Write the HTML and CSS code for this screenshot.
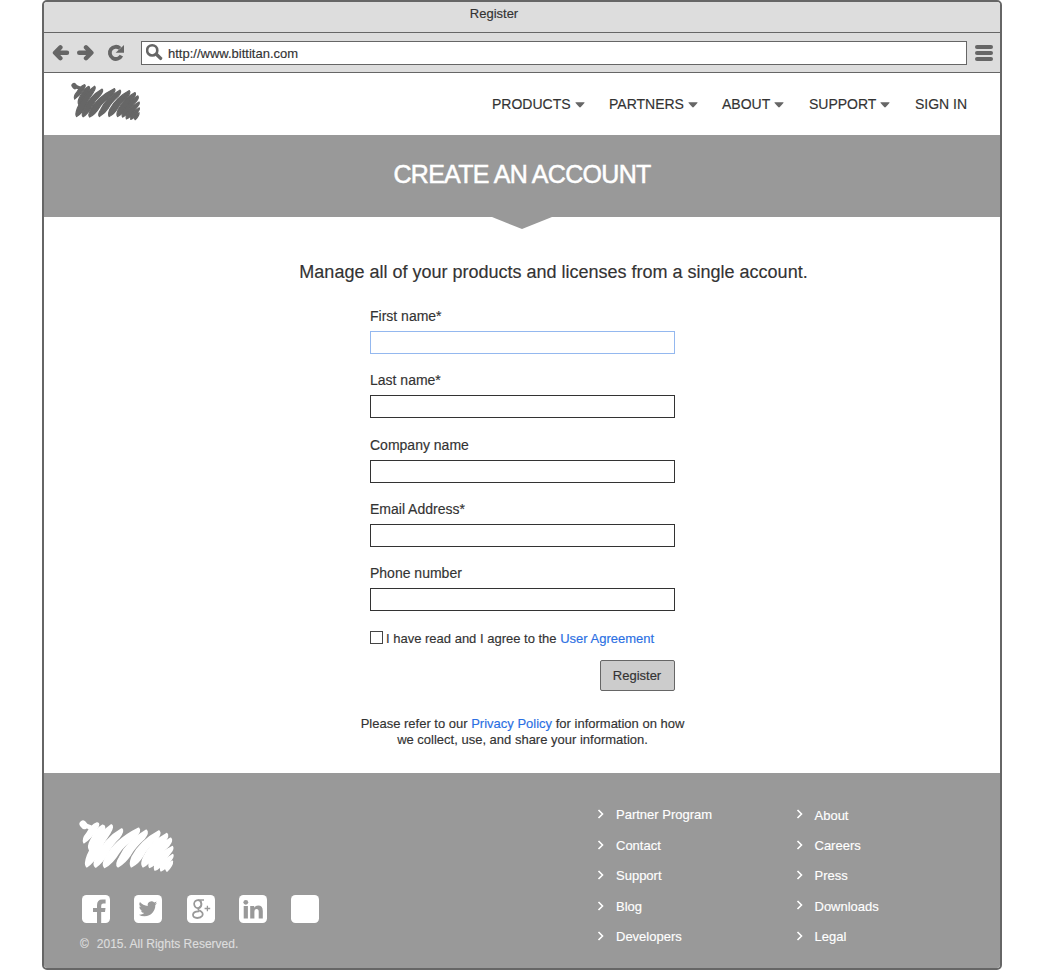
FILE: index.html
```html
<!DOCTYPE html>
<html lang="en">
<head>
<meta charset="utf-8">
<title>Register</title>
<link rel="stylesheet" href="styles.css">
</head>
<body>
<svg class="defs" aria-hidden="true">
  <symbol id="scribble" viewBox="28 28 288 160">
    <g fill="currentColor" stroke="currentColor" stroke-width="5" stroke-linecap="round" stroke-linejoin="round">
      <path stroke-width="21" d="M40 42L44 47"/>
      <path stroke-width="14" d="M46 46L62 52"/>
      <path d="M43 98Q38 86 52 70Q64 46 82 39Q92 40 80 58Q64 84 43 98Z"/>
      <path d="M60 120Q53 110 64 90Q80 56 99 46Q109 47 101 64Q82 100 60 120Z"/>
      <path d="M51 170Q44 162 54 136Q78 76 125 45Q132 50 121 68Q100 96 88 126Q74 156 51 170Z"/>
      <path d="M78 171Q69 164 80 144Q104 86 156 57Q163 63 149 82Q126 104 114 128Q98 158 78 171Z"/>
      <path d="M105 172Q97 164 108 144Q136 90 207 55Q214 62 198 80Q160 108 146 130Q128 160 105 172Z"/>
      <path d="M145 170Q137 162 150 142Q172 94 230 61Q237 68 223 86Q194 112 182 134Q166 158 145 170Z"/>
      <path d="M185 170Q179 162 188 140Q214 92 268 63Q275 70 261 88Q232 112 220 136Q206 160 185 170Z"/>
      <path d="M220 170Q213 162 222 142Q244 96 291 71Q298 78 285 94Q262 116 250 140Q238 162 220 170Z"/>
      <path d="M240 172Q235 162 244 144Q264 106 303 85Q309 92 298 106Q272 130 262 152Q252 168 240 172Z"/>
      <path d="M256 180Q252 168 262 150Q278 124 308 110Q312 116 302 128L276 162Q268 176 256 180Z"/>
      <path d="M274 182Q270 168 280 154L309 134Q312 140 302 152Q290 176 274 182Z"/>
      <path d="M292 183L285 170L308 154Q309 166 292 183Z"/>
    </g>
  </symbol>
  <symbol id="chevron" viewBox="0 0 8 10"><path d="M1.5 1L5.5 5L1.5 9" fill="none" stroke="currentColor" stroke-width="1.6"/></symbol>
  <symbol id="caret" viewBox="0 0 10 6"><path d="M1 .3H9Q10 .3 9.4 1.1L5.8 5Q5 5.8 4.2 5L.6 1.1Q0 .3 1 .3Z" fill="currentColor"/></symbol>
</svg>
<div class="window">
  <div class="titlebar">Register</div>
  <div class="toolbar">
    <svg class="arrows" viewBox="0 0 74 18" fill="none" stroke="currentColor" stroke-width="4.4">
      <path d="M8.4 3.4L3 8.8L8.4 14.2M3.4 8.8H15M34 3.4L39.4 8.8L34 14.2M39 8.8H27.2" stroke-linecap="round" stroke-linejoin="round"/>
      <path d="M68 4.3A6.1 6.1 0 1 0 69.4 11.6" stroke-width="3.8"/>
      <path d="M72 1V8.8H63.6Z" fill="currentColor" stroke="none"/>
    </svg>
    <div class="address">
      <svg class="search" viewBox="0 0 18 18" fill="none" stroke="currentColor"><circle cx="6.2" cy="6.4" r="5.1" stroke-width="2.6"/><path d="M10.6 10.5L14.6 14.4" stroke-width="3.4" stroke-linecap="round"/></svg>
      <span>http://www.bittitan.com</span>
    </div>
    <div class="burger"><i></i><i></i><i></i></div>
  </div>
  <header class="header">
    <svg class="logo"><use href="#scribble"/></svg>
    <nav class="nav">
      <a class="products">PRODUCTS <svg class="caret"><use href="#caret"/></svg></a>
      <a class="partners">PARTNERS <svg class="caret"><use href="#caret"/></svg></a>
      <a class="about">ABOUT <svg class="caret"><use href="#caret"/></svg></a>
      <a class="support">SUPPORT <svg class="caret"><use href="#caret"/></svg></a>
      <a class="signin">SIGN IN</a>
    </nav>
  </header>
  <div class="banner"><h1>CREATE AN ACCOUNT</h1></div>
  <main class="main">
    <svg class="pointer" viewBox="0 0 60 12"><path d="M0 0H60L30 12Z" fill="currentColor"/></svg>
    <h2 class="lead">Manage all of your products and licenses from a single account.</h2>
    <form class="form">
      <label class="field focused"><span>First name*</span><input type="text"></label>
      <label class="field"><span>Last name*</span><input type="text"></label>
      <label class="field"><span>Company name</span><input type="text"></label>
      <label class="field"><span>Email Address*</span><input type="text"></label>
      <label class="field"><span>Phone number</span><input type="text"></label>
      <label class="agree"><input type="checkbox"><span>I have read and I agree to the <a>User Agreement</a></span></label>
      <button class="submit" type="button">Register</button>
    </form>
    <p class="privacy">Please refer to our <a>Privacy Policy</a> for information on how<br>we collect, use, and share your information.</p>
  </main>
  <footer class="footer">
    <div class="brand">
      <svg class="footlogo"><use href="#scribble"/></svg>
      <div class="social">
        <svg viewBox="0 0 28 28"><rect width="28" height="28" rx="4.5" fill="#fff"/><path d="M15 28V16.9H11V12.9H15V10.2Q15 4.6 20.3 4.6H23.6V8.6H21.2Q19.2 8.6 19.2 10.7V12.9H23.5L23 16.9H19.2V28Z" fill="#999"/></svg>
        <svg viewBox="0 0 28 28"><rect width="28" height="28" rx="4.5" fill="#fff"/><path transform="translate(4.7 4.6) scale(.77)" d="M23.95 4.57a10 10 0 0 1-2.82.77 4.96 4.96 0 0 0 2.16-2.72c-.95.55-2 .96-3.12 1.18a4.92 4.92 0 0 0-8.39 4.49C7.69 8.1 4.07 6.13 1.64 3.16a4.92 4.92 0 0 0 1.52 6.57 4.9 4.9 0 0 1-2.23-.61v.06a4.92 4.92 0 0 0 3.95 4.83 5 5 0 0 1-2.21.08 4.94 4.94 0 0 0 4.6 3.42A9.87 9.87 0 0 1 0 19.54a14 14 0 0 0 7.55 2.21c9.05 0 14-7.5 14-13.98v-.64a10 10 0 0 0 2.4-2.56Z" fill="#999"/></svg>
        <svg viewBox="0 0 28 28"><rect width="28" height="28" rx="4.5" fill="#fff"/><g fill="none" stroke="#999"><ellipse cx="10.8" cy="9.2" rx="3.6" ry="4" stroke-width="1.8" transform="rotate(-15 10.8 9.2)"/><path d="M17 4.9H11M13.3 5.5Q16 9.5 12.5 12.2Q9.8 14 12.4 15.6" stroke-width="1.5"/><path d="M12.3 15.2Q17 17.8 15.3 20.8Q13.8 23 10.3 23Q5.8 22.8 6 19.6Q6.4 16 12.3 16.3" stroke-width="1.8"/><path d="M17.6 13.5H23.2M20.4 10.7V16.3" stroke-width="1.3"/></g></svg>
        <svg viewBox="0 0 28 28"><rect width="28" height="28" rx="4.5" fill="#fff"/><g fill="#999"><circle cx="6.8" cy="7.3" r="2.4"/><path d="M4.7 11H8.9V23.5H4.7ZM11.2 11H15.2V12.7Q16.5 10.6 19.1 10.6Q23.8 10.6 23.8 16V23.5H19.7V16.8Q19.7 14 17.6 14Q15.4 14 15.4 16.8V23.5H11.2Z"/></g></svg>
        <svg viewBox="0 0 28 28"><rect width="28" height="28" rx="4.5" fill="#fff"/></svg>
      </div>
      <div class="copyright"><span>©</span><span>2015. All Rights Reserved.</span></div>
    </div>
    <ul class="links">
      <li><svg><use href="#chevron"/></svg>Partner Program</li>
      <li><svg><use href="#chevron"/></svg>Contact</li>
      <li><svg><use href="#chevron"/></svg>Support</li>
      <li><svg><use href="#chevron"/></svg>Blog</li>
      <li><svg><use href="#chevron"/></svg>Developers</li>
    </ul>
    <ul class="links second">
      <li><svg><use href="#chevron"/></svg>About</li>
      <li><svg><use href="#chevron"/></svg>Careers</li>
      <li><svg><use href="#chevron"/></svg>Press</li>
      <li><svg><use href="#chevron"/></svg>Downloads</li>
      <li><svg><use href="#chevron"/></svg>Legal</li>
    </ul>
  </footer>
</div>
</body>
</html>
```

FILE: styles.css
```css
* { box-sizing: border-box; }
body { margin: 0; background: #fff; color: #333; font: 13px/16px "Liberation Sans", Arial, sans-serif; -webkit-text-stroke: .15px currentColor; }
h1, h2, p, ul { margin: 0; padding: 0; font-weight: normal; }
svg { display: block; flex: none; }
.defs { display: none; }
a { color: #2b6fe3; }
.window { width: 960px; height: 970px; margin-left: 42px; border: 2px solid #666; border-radius: 5px; overflow: hidden; display: flex; flex-direction: column; }
.titlebar { height: 31px; padding: 4px 56px 0 0; background: #ddd; border-bottom: 1px solid #666; text-align: center; }
.toolbar { height: 40px; background: #ddd; border-bottom: 1px solid #666; display: flex; align-items: center; color: #666; }
.arrows { width: 74px; height: 18px; margin-left: 8px; }
.address { width: 826px; height: 24px; margin-left: 15px; background: #fff; border: 1px solid #666; display: flex; align-items: center; color: #333; }
.search { width: 18px; height: 18px; margin: 0 4px 0 4px; color: #666; }
.address span { padding-top: 2px; }
.burger { width: 18px; height: 16px; margin-left: 8px; display: flex; flex-direction: column; justify-content: space-between; }
.burger i { height: 4px; border-radius: 2px; background: #666; }
.header { height: 62px; display: flex; }
.logo { width: 70px; height: 39px; margin: 9px 0 0 27px; color: #666; }
.nav { display: flex; margin-left: 351px; padding-top: 23px; font-size: 14px; }
.nav a { color: #333; display: flex; white-space: nowrap; }
.products { width: 117px; }
.partners { width: 113px; }
.about { width: 87px; }
.support { width: 106px; }
.caret { width: 10px; height: 6px; margin: 6px 0 0 4px; color: #666; }
.banner { height: 82px; background: #999; color: #fff; text-align: center; padding-top: 24px; }
.banner h1 { font-size: 25px; line-height: 30px; letter-spacing: -.7px; -webkit-text-stroke: .5px #fff; }
.main { height: 556px; display: flex; flex-direction: column; align-items: center; }
.pointer { width: 60px; height: 12px; color: #999; }
.lead { font-size: 18px; line-height: 22px; margin: 32px 0 0 63px; white-space: nowrap; }
.form { width: 305px; margin: 24px 0 0 1px; display: flex; flex-direction: column; }
.field { height: 64.25px; font-size: 14px; line-height: 18px; display: block; }
.field span { display: block; height: 24px; }
.field input { display: block; width: 305px; height: 23px; border: 1px solid #333; background: #fff; padding: 0; border-radius: 0; }
.field.focused input { border-color: #94b8ef; }
.agree { display: flex; align-items: center; height: 16px; margin-top: 2px; gap: 3px; white-space: nowrap; }
.agree input { appearance: none; width: 13px; height: 13px; margin: 0 0 1px; border: 1px solid #444; background: #fff; }
.agree span { padding-top: 1px; }
.submit { align-self: flex-end; width: 75px; height: 31px; margin-top: 14px; padding: 0 1px 0 0; font: inherit; color: #333; background: #ccc; border: 1px solid #666; border-radius: 2px; }
.privacy { text-align: center; margin: 25px 0 0 1px; }
.footer { height: 195px; background: #999; color: #fff; display: flex; }
.brand { width: 553px; padding: 46px 0 0 36px; }
.footlogo { width: 96px; height: 54px; margin-left: -1px; }
.social { display: flex; gap: 24.3px; margin: 21.6px 0 0 2px; }
.social svg { width: 28px; height: 28px; }
.copyright { display: flex; gap: 8px; margin-top: 13px; color: #ddd; font-size: 12px; }
.links { width: 198.5px; padding-top: 34.4px; list-style: none; }
.second { padding-top: 34.7px; }
.links li { height: 30.4px; display: flex; }
.links svg { width: 8px; height: 10px; margin: 2px 11px 0 0; }
.second svg { margin: 1.5px 11px 0 0; }
```
